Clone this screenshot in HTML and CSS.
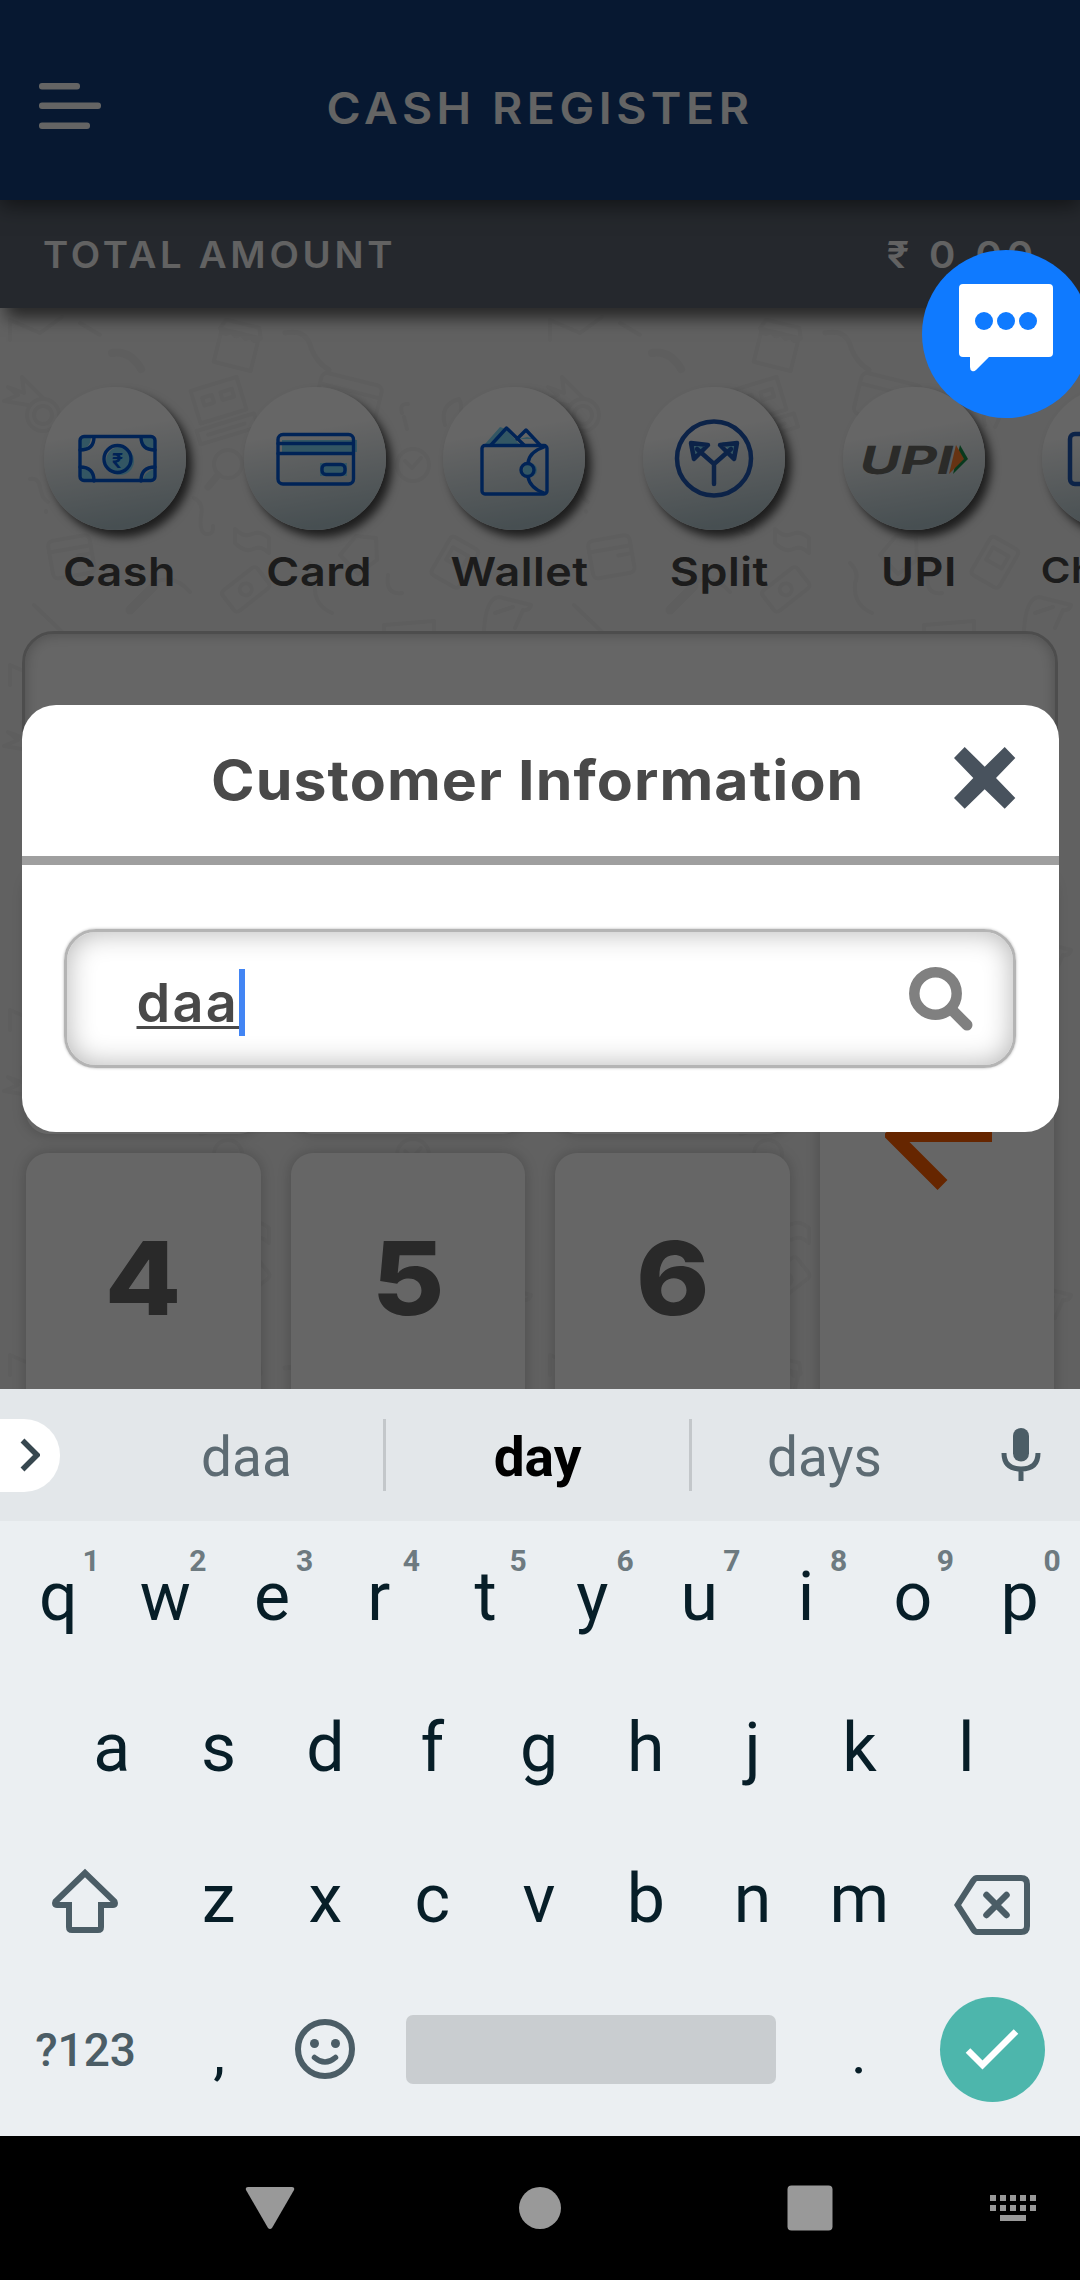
FILE: index.html
```html
<!DOCTYPE html>
<html lang="en">
<head>
<meta charset="utf-8">
<title>Cash Register</title>
<link rel="stylesheet" href="styles.css">
</head>
<body>
<main class="app">
  <svg class="doodles" width="1080" height="1389" aria-hidden="true">
    <defs>
      <pattern id="doodle" x="0" y="305" width="540" height="345" patternUnits="userSpaceOnUse">
        <g fill="none" stroke="#ebebeb" stroke-width="4" stroke-linecap="round" stroke-linejoin="round">
          <path d="M10 35V15L40 28L62 12M80 18l20 12"/>
          <path d="M112 48q18-3 29 16" stroke-width="8"/>
          <g transform="rotate(14 237 42)"><path d="M218 28h38v34h-38zM216 28l4-10h34l4 10q-5 8-10 0q-5 8-10 0q-5 8-10 0q-5 8-12 0"/></g>
          <path d="M285 28q22-4 26 15q6 15 18 22" stroke-width="5"/>
          <g transform="rotate(14 350 90)"><rect x="318" y="74" width="62" height="42" rx="6"/><path d="M318 86h62"/></g>
          <circle cx="43" cy="110" r="16"/><circle cx="43" cy="110" r="9"/><path d="M28 100L4 96l14-6L8 82l16 6-2-16 22 22"/>
          <g transform="rotate(-17 220 100)"><path d="M196 78h48v34h-48zM190 118h60v14h-60zM205 88h10v8h-10zM224 88h12v8h-12zM200 125h38"/></g>
          <circle cx="228" cy="159" r="14"/><path d="M218 170l-10 12" stroke-width="7"/>
          <circle cx="413" cy="160" r="16"/><path d="M405 156l7 7 9-10"/>
          <path d="M402 108q-3-10 6-9M404 112l3 12M445 120q-6-20 14-26q6 10-4 28"/>
          <path d="M30 174q8-2 10 8q2 12 8 15M46 206v1M194 193q10 5 7 18q-2 16 5 18q8 1 7-8"/>
          <g transform="rotate(-10 70 250)"><rect x="50" y="233" width="42" height="38" rx="5"/><path d="M50 244h42M78 252h14"/></g>
          <path d="M235 224q9 9 17 5t17 4v15q-8-8-16-4t-18-6z"/>
          <path d="M340 250l16-19 20 2 1 22-19 14z"/>
          <g transform="rotate(-38 245 285)"><rect x="224" y="272" width="44" height="26" rx="4"/><circle cx="246" cy="285" r="6"/></g>
          <path d="M130 305l24-24" stroke-width="9"/><path d="M155 277q20-8 35 10M34 300l28 27M310 258q10 10 5 20q-2 22 17 30"/>
          <path d="M388 270q-3 20 14 18"/>
          <g transform="rotate(30 455 255)"><rect x="440" y="235" width="32" height="44" rx="4"/><path d="M447 245h18v14h-18z"/></g>
          <path d="M384 320l50-4v12l-50 4zM484 325q2-32 15-33l32 8q-2 6-8 5l-8 18M495 308l18-6"/>
        </g>
      </pattern>
    </defs>
    <rect y="305" width="1080" height="1084" fill="url(#doodle)"/>
  </svg>

  <header class="topbar">
    <svg class="menu" width="62" height="46" viewBox="0 0 62 46"><rect width="41" height="6.5" rx="3"/><rect y="19.5" width="62" height="6.5" rx="3"/><rect y="39.5" width="51" height="6.5" rx="3"/></svg>
    <h1 class="topbar-title">CASH REGISTER</h1>
  </header>

  <section class="total">
    <span class="total-label">TOTAL AMOUNT</span>
    <span class="total-value">₹ 0.00</span>
  </section>

  <nav class="methods">
    <a class="method">
      <span class="disc"><svg class="ico" viewBox="0 0 142 142">
        <g class="tint"><path d="M37 51h10q-1 10-10 12zM110 51H97q1 10 13 14zM37 94h13q-1-12-13-12zM110 94H99q1-9 11-12z"/><circle cx="76" cy="74" r="14"/></g>
        <g class="ink"><rect x="36" y="49.500" width="75" height="44" rx="4"/><path d="M50 50q0 13-14 13M97 50q0 13 14 13M50 94q0-14-14-14M97 94q0-14 14-14"/><circle cx="73.500" cy="72" r="13.500"/></g>
        <text class="rupee" x="73.500" y="80.500" text-anchor="middle">₹</text>
      </svg></span><span class="method-name">Cash</span></a>
    <a class="method">
      <span class="disc"><svg class="ico" viewBox="0 0 142 142">
        <g class="tint"><path d="M38 53h75v12H38zM76 76h27v13H76z"/></g>
        <g class="ink"><rect x="34" y="47.500" width="75.500" height="49.500" rx="5"/><path d="M34 56.500h75M34 66.500h75"/><rect x="78" y="77.500" width="23" height="10" rx="4"/></g>
      </svg></span><span class="method-name">Card</span></a>
    <a class="method">
      <span class="disc"><svg class="ico" viewBox="0 0 142 142">
        <g class="tint"><path d="M42 57l15-17 6 2 14 16zM76 52l8-2 8 2z"/><circle cx="87" cy="83" r="7"/></g>
        <g class="ink"><rect x="39" y="58.500" width="65" height="48.500" rx="3"/><path d="M48 58l15.500-17L81 58M74 52l9-9 14 15M101 60q-15 5-16 16M85 90q2 11 16 16"/><circle cx="84.500" cy="83" r="6.500"/></g>
      </svg></span><span class="method-name">Wallet</span></a>
    <a class="method">
      <span class="disc"><svg class="ico" viewBox="0 0 142 142">
        <g class="tint"><path d="M47 56l17 0-14 15zM94 56l-15-1 14 17z"/></g>
        <g class="ink soft"><circle cx="71" cy="71.500" r="37"/><path d="M71 97V77L54 62M71 77L88 62"/><path d="M48 56l17 2-14 14zM94 56l-17 2 14 14z"/></g>
      </svg></span><span class="method-name">Split</span></a>
    <a class="method">
      <span class="disc"><svg class="ico" viewBox="0 0 142 142">
        <path d="M117 58l8 14-15 15z" fill="#15904a"/>
        <text class="upi" transform="translate(14 86.500) skewX(-14)" textLength="93" lengthAdjust="spacingAndGlyphs">UPI</text>
        <path d="M113 58l8 14-15 15z" fill="#ff8030"/>
      </svg></span><span class="method-name">UPI</span></a>
    <a class="method">
      <span class="disc"><svg class="ico" viewBox="0 0 142 142">
        <g class="tint"><circle cx="43" cy="72" r="5"/></g>
        <g class="ink soft"><rect x="28" y="47" width="86" height="50" rx="5"/></g>
      </svg></span><span class="method-name small">Cheque</span></a>
  </nav>

  <div class="display"></div>

  <section class="keypad">
    <b class="pad"></b><b class="pad"></b><b class="pad"></b>
    <b class="pad tall"><svg width="110" height="110" viewBox="0 0 110 110"><path d="M107 55H12M57.500 105L8 55.500 57.500 6" fill="none" stroke="#ff5f00" stroke-width="14"/></svg></b>
    <b class="pad"><span class="digit">4</span></b><b class="pad"><span class="digit">5</span></b><b class="pad"><span class="digit">6</span></b>
  </section>

  <div class="scrim"></div>

  <section class="dialog">
    <div class="dialog-head">
      <h2 class="dialog-title">Customer Information</h2>
      <svg class="close" width="62" height="62" viewBox="0 0 62 62"><path d="M10.700 0L0 11l19.300 20L0 51l10.700 10.700L30.700 42.300l20 19.400L61.300 51 42 31l19.300-20L50.700 0l-20 19.700z"/></svg>
    </div>
    <div class="search">
      <span class="query">daa</span><i class="caret"></i>
      <svg class="lens" width="64" height="64" viewBox="0 0 64 64"><circle cx="26.500" cy="26.500" r="21.200" fill="none" stroke="#808080" stroke-width="10.500"/><path d="M42 42L58 58" stroke="#808080" stroke-width="11" stroke-linecap="round"/></svg>
    </div>
  </section>

  <button class="chat" aria-label="Chat">
    <svg width="94" height="88" viewBox="0 0 94 88"><path d="M4 0h86q4 0 4 4v65q0 4-4 4H30L17 86q-2 2-4 1t-2-4V73H4q-4 0-4-4V4q0-4 4-4z" fill="#fff"/><g fill="#0f7aff"><circle cx="25" cy="37" r="9"/><circle cx="47" cy="37" r="9"/><circle cx="69" cy="37" r="9"/></g></svg>
  </button>
</main>

<section class="keyboard">
  <div class="strip">
    <span class="expand"><svg width="20" height="34" viewBox="0 0 20 34"><path d="M2.500 2.500L17 17 2.500 31.500" fill="none" stroke="#37474f" stroke-width="5.500"/></svg></span>
    <span class="hint">daa</span><span class="hint best">day</span><span class="hint last">days</span>
    <svg class="mic" width="40" height="54" viewBox="0 0 40 54"><rect x="12" y="0" width="16" height="33.500" rx="8" fill="#4b5d66"/><path d="M3 25q0 16 17 16t17-16M20 41v12" fill="none" stroke="#4b5d66" stroke-width="5"/></svg>
  </div>
  <div class="row">
    <span class="key">q<sup>1</sup></span><span class="key">w<sup>2</sup></span><span class="key">e<sup>3</sup></span><span class="key">r<sup>4</sup></span><span class="key">t<sup>5</sup></span><span class="key">y<sup>6</sup></span><span class="key">u<sup>7</sup></span><span class="key">i<sup>8</sup></span><span class="key">o<sup>9</sup></span><span class="key">p<sup>0</sup></span>
  </div>
  <div class="row">
    <span class="key">a</span><span class="key">s</span><span class="key">d</span><span class="key">f</span><span class="key">g</span><span class="key">h</span><span class="key">j</span><span class="key">k</span><span class="key">l</span>
  </div>
  <div class="row">
    <span class="key wide left"><svg width="68" height="66" viewBox="0 0 68 66"><path d="M34 5L4.500 33.500Q3 37 6 37H18V59Q18 62 21 62H47Q50 62 50 59V37H62Q65 37 63.500 33.500Z" fill="none" stroke="#4b5d66" stroke-width="6"/></svg></span>
    <span class="key">z</span><span class="key">x</span><span class="key">c</span><span class="key">v</span><span class="key">b</span><span class="key">n</span><span class="key">m</span>
    <span class="key wide right"><svg width="76" height="60" viewBox="0 0 76 60"><path d="M23 3H67Q73 3 73 9V51Q73 57 67 57H23Q21 57 19 54L3.500 30 19 6Q21 3 23 3Z" fill="none" stroke="#4b5d66" stroke-width="6"/><path d="M32.500 20l20 20M52.500 20l-20 20" stroke="#4b5d66" stroke-width="6.500" stroke-linecap="round"/></svg></span>
  </div>
  <div class="row">
    <span class="key wide sym">?123</span>
    <span class="key punct">,</span>
    <span class="key emoji"><svg width="60" height="60" viewBox="0 0 60 60"><circle cx="30" cy="30" r="27" fill="none" stroke="#4b5d66" stroke-width="6"/><circle cx="19.500" cy="24.500" r="4.500" fill="#4b5d66"/><circle cx="40.500" cy="24.500" r="4.500" fill="#4b5d66"/><path d="M19.500 38.500q10.500 9 21 0" fill="none" stroke="#4b5d66" stroke-width="5.500" stroke-linecap="round"/></svg></span>
    <span class="space"></span>
    <span class="key punct">.</span>
    <span class="key wide"><span class="enter"><svg width="56" height="42" viewBox="0 0 56 42"><path d="M4 21.500L18.500 36 52 2.500" fill="none" stroke="#fff" stroke-width="6.500"/></svg></span></span>
  </div>
</section>

<footer class="sysnav">
  <svg width="50" height="44" viewBox="0 0 50 44"><path d="M3 1h44q3 0 2 3L27 42q-2 2-4 0L1 4q-1-3 2-3z"/></svg>
  <svg width="42" height="42" viewBox="0 0 42 42"><circle cx="21" cy="21" r="21"/></svg>
  <svg width="46" height="46" viewBox="0 0 46 46"><rect x=".5" y=".5" width="45" height="45" rx="4"/></svg>
  <svg width="46" height="26" viewBox="0 0 46 26"><path d="M0 0h6v6H0zM10 0h6v6h-6zM20 0h6v6h-6zM30 0h6v6h-6zM40 0h6v6h-6zM0 10h6v6H0zM10 10h6v6h-6zM20 10h6v6h-6zM30 10h6v6h-6zM40 10h6v6h-6zM10 20h26v6H10z"/></svg>
</footer>
</body>
</html>
```
FILE: styles.css
```css
* { box-sizing: border-box; }
body {
  margin: 0;
  width: 1080px;
  height: 2280px;
  overflow: hidden;
  font-family: Inter, "Noto Sans", sans-serif;
  background: #000;
}
svg { display: block; flex: none; }

/* register screen */
.app {
  position: relative;
  height: 1389px;
  overflow: hidden;
  background: #f2f2f2;
  display: flex;
  flex-direction: column;
}
.app > * { flex: none; }
.doodles { position: absolute; left: 0; top: 0; }
.topbar {
  position: relative;
  z-index: 2;
  height: 200px;
  padding: 12px 39px 0;
  display: grid;
  grid-template-columns: 62px 1fr 62px;
  align-items: center;
  background: #123e7a;
  box-shadow: 0 6px 20px rgba(0, 0, 0, .5);
}
.menu { fill: #fafafa; }
.topbar-title {
  margin: 4px 0 0;
  text-align: center;
  font-size: 44px;
  line-height: 54px;
  font-weight: 600;
  letter-spacing: 4.3px;
  transform: scaleX(1.055);
  color: #fafafa;
}
.total {
  position: relative;
  z-index: 1;
  height: 108px;
  padding: 0 42px 0 43px;
  display: flex;
  justify-content: space-between;
  align-items: center;
  background: #5c6470;
  box-shadow: 6px 10px 16px rgba(0, 0, 0, .6);
  font-size: 37px;
  font-weight: 600;
  color: #f5f5f5;
}
.total-label { letter-spacing: 3.6px; transform: scaleX(1.035); transform-origin: left; }
.total-value { letter-spacing: 4.5px; transform: scaleX(1.08); transform-origin: right; }
.methods {
  position: relative;
  display: flex;
  padding: 79px 0 0 20px;
  height: 323px;
}
.method {
  flex: none;
  width: 199.700px;
  display: flex;
  flex-direction: column;
  align-items: center;
}
.disc {
  width: 142px;
  height: 143px;
  margin-right: 10px;
  border-radius: 50%;
  background: linear-gradient(170deg, #fff 32%, #b2c6cd 90%);
  box-shadow: 6px 7px 10px rgba(0, 0, 0, .7);
}
.ico { width: 142px; height: 142px; }
.ink { fill: none; stroke: #0057d8; stroke-width: 3.400; stroke-linejoin: round; stroke-linecap: round; }
.soft { stroke: #2057b4; stroke-width: 4.500; }
.tint { fill: #80d8f8; }
.rupee { fill: #0057d8; font: 700 20px Inter, sans-serif; }
.upi { fill: #6b6b66; font: 700 39px Inter, sans-serif; }
.method-name {
  margin-top: 15px;
  font-size: 40px;
  line-height: 54px;
  font-weight: 600;
  letter-spacing: .5px;
  transform: scaleX(1.12);
  color: #464646;
}
.method-name.small { font-size: 36px; line-height: 50px; }
.display {
  position: relative;
  height: 240px;
  margin: 0 22px;
  border: 3px solid #c0c0c0;
  border-radius: 32px;
  background: #fff;
  box-shadow: inset 0 0 14px rgba(0, 0, 0, .25);
}
.keypad {
  position: relative;
  margin: 1px 26px 0;
  display: grid;
  grid-template-columns: repeat(4, 234.500px);
  grid-auto-rows: 262px;
  gap: 19px 30px;
}
.pad {
  display: flex;
  align-items: center;
  justify-content: center;
  padding-bottom: 12px;
  border-radius: 22px;
  background: #fff;
  box-shadow: 0 0 14px rgba(0, 0, 0, .22);
  font-size: 102px;
  font-weight: 800;
  color: #666;
}
.digit { transform: scaleX(1.09); }
.tall { grid-row: span 2; padding: 0 0 17px 6px; }
.scrim { position: absolute; inset: 0; z-index: 3; background: rgba(0, 0, 0, .6); }

/* customer dialog */
.dialog {
  position: absolute;
  z-index: 4;
  left: 21.500px;
  top: 705px;
  width: 1037px;
  height: 427px;
  border-radius: 34px;
  background: #fff;
}
.dialog-head {
  height: 160px;
  padding: 0 43px 0 189px;
  display: flex;
  justify-content: space-between;
  align-items: center;
  border-bottom: 9px solid #9f9f9f;
}
.dialog-title {
  margin: 0 0 2px;
  font-size: 55px;
  font-weight: 700;
  letter-spacing: 1px;
  white-space: nowrap;
  transform: scaleX(1.072);
  transform-origin: left;
  color: #494949;
}
.close { fill: #48525d; margin-bottom: 5px; }
.search {
  margin: 64px 43px 0 42px;
  height: 139px;
  padding: 0 40px 0 70px;
  display: flex;
  align-items: center;
  border: 3px solid #b4b4b4;
  border-radius: 32px;
  box-shadow: 0 0 3px rgba(0, 0, 0, .3), inset 0 0 28px rgba(0, 0, 0, .3);
}
.query {
  margin-top: 8px;
  font-size: 54px;
  line-height: 64px;
  font-weight: 600;
  letter-spacing: 2.300px;
  color: #494949;
  text-decoration: underline 3px;
  text-underline-offset: 4px;
}
.caret { width: 6px; height: 67px; margin-top: 8px; background: #4285f4; }
.lens { margin-left: auto; }

.chat {
  position: absolute;
  z-index: 5;
  left: 922px;
  top: 250px;
  width: 168px;
  height: 168px;
  padding: 0 1px 13px 0;
  display: flex;
  align-items: center;
  justify-content: center;
  border: 0;
  border-radius: 50%;
  background: #0f7aff;
}

/* soft keyboard */
.keyboard {
  height: 747px;
  background: #ebeff2;
  font-family: Roboto, sans-serif;
  color: #071e28;
}
.strip {
  height: 132px;
  display: grid;
  grid-template-columns: 110px 273px 309px 265px 123px;
  align-items: center;
  background: #e3e7ea;
}
.expand {
  width: 60px;
  height: 73px;
  display: flex;
  align-items: center;
  padding-left: 20px;
  border-radius: 0 36px 36px 0;
  background: #fff;
}
.hint {
  height: 72px;
  line-height: 77px;
  text-align: center;
  font-size: 55px;
  color: #5d6b73;
}
.best { border: solid #c3c7ca; border-width: 0 3px; font-weight: 700; color: #000; }
.mic { margin-left: 44px; }
.row { height: 151px; padding-right: 2px; display: flex; justify-content: center; }
.key {
  position: relative;
  flex: none;
  width: 106.800px;
  display: flex;
  align-items: center;
  justify-content: center;
  font-size: 68px;
}
.key sup {
  position: absolute;
  left: 54px;
  width: 64px;
  top: 22px;
  text-align: center;
  font-size: 30px;
  line-height: 36px;
  font-weight: 700;
  color: #6d7a80;
}
.wide { width: 160.500px; }
.left { padding: 5px 0 0 0; }
.right { padding: 12px 3px 0 0; }
.sym { font-size: 46px; font-weight: 500; color: #4b5d66; }
.punct { font-size: 60px; padding-top: 6px; }
.emoji { padding: 0 2px 2px 0; }
.space {
  width: 370px;
  margin: 41px 29px 0 27px;
  height: 69px;
  border-radius: 7px;
  background: #c9cdd0;
}
.enter {
  width: 105px;
  height: 105px;
  display: flex;
  align-items: center;
  justify-content: center;
  border-radius: 50%;
  background: #4db6ac;
}

/* system navigation */
.sysnav {
  height: 144px;
  display: grid;
  grid-template-columns: 270px 270px 270px 136px;
  padding-left: 135px;
  align-items: center;
  justify-items: center;
  fill: #999;
}
```
